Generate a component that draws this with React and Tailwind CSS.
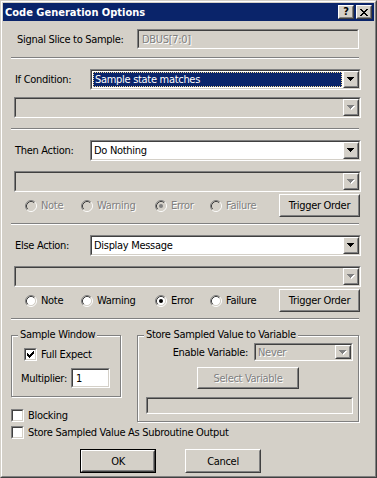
import React from "react";

const dis = "text-[#808080] [text-shadow:1px_1px_0_#ffffff]";

const Sunken = ({ className = "", inner = "bg-white", children }) => (
  <div className={`border border-t-[#808080] border-l-[#808080] border-r-white border-b-white ${className}`}>
    <div className={`h-full w-full border border-t-[#404040] border-l-[#404040] border-r-[#d4d0c8] border-b-[#d4d0c8] ${inner}`}>
      {children}
    </div>
  </div>
);

const Raised = ({ className = "", children }) => (
  <div className={`border border-t-white border-l-white border-r-[#404040] border-b-[#404040] bg-[#d4d0c8] ${className}`}>
    <div className="flex h-full w-full items-center justify-center border border-t-[#d4d0c8] border-l-[#d4d0c8] border-r-[#808080] border-b-[#808080]">
      {children}
    </div>
  </div>
);

const ArrowRows = ({ fill, dx = 0, dy = 0 }) => (
  <g fill={fill}>
    <rect x={0 + dx} y={0 + dy} width="7" height="1" />
    <rect x={1 + dx} y={1 + dy} width="5" height="1" />
    <rect x={2 + dx} y={2 + dy} width="3" height="1" />
    <rect x={3 + dx} y={3 + dy} width="1" height="1" />
  </g>
);

const Arrow = ({ disabled }) => (
  <svg width="8" height="5" viewBox="0 0 8 5" shapeRendering="crispEdges">
    {disabled && <ArrowRows fill="#ffffff" dx={1} dy={1} />}
    <ArrowRows fill={disabled ? "#808080" : "#000000"} />
  </svg>
);

const Combo = ({ className, text, disabled, selected }) => (
  <Sunken className={className} inner={disabled ? "bg-[#d4d0c8]" : "bg-white"}>
    <div className="flex h-full">
      <div className="flex min-w-0 flex-1 items-center">
        {selected ? (
          <div className="mx-[1px] flex h-[15px] flex-1 items-center border border-dotted border-[#f5db95] bg-[#0a246a] pl-[1px] text-white">
            {text}
          </div>
        ) : (
          <span className={`pl-[2px] ${disabled ? dis : ""}`}>{text}</span>
        )}
      </div>
      <Raised className="h-full w-[16px]">
        <Arrow disabled={disabled} />
      </Raised>
    </div>
  </Sunken>
);

const Radio = ({ checked, disabled, label, className = "" }) => (
  <div className={`flex items-center ${className}`}>
    <svg width="12" height="12" viewBox="0 0 12 12">
      <circle cx="6" cy="6" r="4.5" fill={disabled ? "#d4d0c8" : "#ffffff"} />
      <path d="M2.11 9.89A5.5 5.5 0 0 1 9.89 2.11" stroke="#808080" fill="none" />
      <path d="M9.89 2.11A5.5 5.5 0 0 1 2.11 9.89" stroke="#ffffff" fill="none" />
      <path d="M2.82 9.18A4.5 4.5 0 0 1 9.18 2.82" stroke="#404040" fill="none" />
      <path d="M9.18 2.82A4.5 4.5 0 0 1 2.82 9.18" stroke="#d4d0c8" fill="none" />
      {checked && <circle cx="6" cy="6" r="2" fill={disabled ? "#808080" : "#000000"} />}
    </svg>
    <span className={`ml-[4px] ${disabled ? dis : ""}`}>{label}</span>
  </div>
);

const Check = ({ checked, label, className = "" }) => (
  <div className={`flex h-[13px] items-center ${className}`}>
    <Sunken className="h-[13px] w-[13px] shrink-0">
      {checked && (
        <svg width="9" height="9" viewBox="0 0 9 9" shapeRendering="crispEdges" className="block">
          {[2, 3, 4, 3, 2, 1, 0].map((top, i) => (
            <rect key={i} x={i + 1} y={top + 1} width="1" height="3" fill="#000000" />
          ))}
        </svg>
      )}
    </Sunken>
    <span className="ml-[4px] whitespace-nowrap">{label}</span>
  </div>
);

const Sep = ({ className = "" }) => (
  <div className={`h-[2px] w-[348px] border-t border-t-[#808080] border-b border-b-white ${className}`} />
);

const Group = ({ title, className = "", children }) => (
  <div className={`relative border border-[#808080] shadow-[inset_1px_1px_0_#ffffff,1px_1px_0_#ffffff] ${className}`}>
    <span className="absolute left-[6px] top-[-8px] bg-[#d4d0c8] px-[2px] leading-[13px]">{title}</span>
    {children}
  </div>
);

const RadioRow = ({ disabled, className = "" }) => (
  <div className={`flex h-[23px] items-center ${className}`}>
    <Radio className="ml-[14px] w-[56px]" label="Note" disabled={disabled} />
    <Radio className="w-[74px]" label="Warning" disabled={disabled} />
    <Radio className="w-[55px]" label="Error" checked disabled={disabled} />
    <Radio className="w-[69px]" label="Failure" disabled={disabled} />
    <Raised className="h-[23px] w-[81px]">Trigger Order</Raised>
  </div>
);

export default function App() {
  return (
    <div className="w-[377px] h-[478px] border border-t-[#d4d0c8] border-l-[#d4d0c8] border-r-[#404040] border-b-[#404040] bg-[#d4d0c8] text-[11px] leading-[13px] tracking-[-0.3px] text-black font-[family-name:'DejaVu_Sans_Condensed','Liberation_Sans',Arial,sans-serif] select-none">
      <div className="h-full border border-t-white border-l-white border-r-[#808080] border-b-[#808080]">
        <div className="mx-[1px] mt-[1px] flex h-[18px] items-center bg-[#0a246a] pl-[2px] pr-[2px] tracking-normal">
          <span className="flex-1 font-bold text-white">Code Generation Options</span>
          <Raised className="h-[14px] w-[16px]">
            <span className="text-[11px] font-bold leading-[10px]">?</span>
          </Raised>
          <Raised className="ml-[2px] h-[14px] w-[16px]">
            <svg width="8" height="7" viewBox="0 0 8 7" shapeRendering="crispEdges">
              <g fill="#000000">
                <rect x="0" y="0" width="2" height="1" />
                <rect x="6" y="0" width="2" height="1" />
                <rect x="1" y="1" width="2" height="1" />
                <rect x="5" y="1" width="2" height="1" />
                <rect x="2" y="2" width="4" height="1" />
                <rect x="3" y="3" width="2" height="1" />
                <rect x="2" y="4" width="4" height="1" />
                <rect x="1" y="5" width="2" height="1" />
                <rect x="5" y="5" width="2" height="1" />
                <rect x="0" y="6" width="2" height="1" />
                <rect x="6" y="6" width="2" height="1" />
              </g>
            </svg>
          </Raised>
        </div>

        <div className="flex flex-col pl-[9px]">
          <div className="mt-[8px] flex h-[20px] items-center">
            <span className="ml-[6px] w-[120px]">Signal Slice to Sample:</span>
            <Sunken className="h-[20px] w-[222px]" inner="bg-[#d4d0c8]">
              <div className={`flex h-full items-center pl-[3px] ${dis}`}>DBUS[7:0]</div>
            </Sunken>
          </div>
          <Sep className="mt-[8px]" />

          <div className="mt-[10px] flex h-[21px] items-center">
            <span className="ml-[4px] w-[75px]">If Condition:</span>
            <Combo className="h-[21px] w-[271px]" text="Sample state matches" selected />
          </div>
          <Combo className="ml-[3px] mt-[7px] h-[21px] w-[347px]" disabled />
          <Sep className="mt-[10px]" />

          <div className="mt-[10px] flex h-[21px] items-center">
            <span className="ml-[4px] w-[75px]">Then Action:</span>
            <Combo className="h-[21px] w-[271px]" text="Do Nothing" />
          </div>
          <Combo className="ml-[3px] mt-[10px] h-[21px] w-[347px]" disabled />
          <RadioRow className="mt-[2px]" disabled />
          <Sep className="mt-[6px]" />

          <div className="mt-[10px] flex h-[21px] items-center">
            <span className="ml-[4px] w-[75px]">Else Action:</span>
            <Combo className="h-[21px] w-[271px]" text="Display Message" />
          </div>
          <Combo className="ml-[3px] mt-[10px] h-[21px] w-[347px]" disabled />
          <RadioRow className="mt-[2px]" />
          <Sep className="mt-[6px]" />

          <div className="mt-[15px] flex items-start">
            <div className="flex w-[110px] flex-col">
              <Group title="Sample Window" className="h-[62px]">
                <Check className="ml-[12px] mt-[12px]" checked label="Full Expect" />
                <div className="mt-[7px] flex h-[20px] items-center">
                  <span className="ml-[9px] w-[50px]">Multiplier:</span>
                  <Sunken className="h-[20px] w-[39px]">
                    <div className="flex h-full items-center pl-[3px]">1</div>
                  </Sunken>
                </div>
              </Group>
              <Check className="mt-[12px]" label="Blocking" />
            </div>
            <Group title="Store Sampled Value to Variable" className="ml-[16px] h-[87px] w-[222px]">
              <div className="mt-[7px] flex h-[18px] items-center justify-end pr-[5px]">
                <span className="mr-[6px]">Enable Variable:</span>
                <Combo className="h-[18px] w-[99px]" text="Never" disabled />
              </div>
              <div className="mt-[6px] flex justify-center">
                <Raised className="h-[22px] w-[102px]">
                  <span className={dis}>Select Variable</span>
                </Raised>
              </div>
              <Sunken className="ml-[8px] mt-[8px] h-[17px] w-[207px]" inner="bg-[#d4d0c8]" />
            </Group>
          </div>
          <Check className="mt-[4px]" label="Store Sampled Value As Subroutine Output" />

          <div className="mt-[10px] flex">
            <div className="ml-[69px] h-[24px] w-[76px] border border-black">
              <Raised className="h-full w-full">OK</Raised>
            </div>
            <Raised className="ml-[29px] h-[24px] w-[76px]">Cancel</Raised>
          </div>
        </div>
      </div>
    </div>
  );
}
